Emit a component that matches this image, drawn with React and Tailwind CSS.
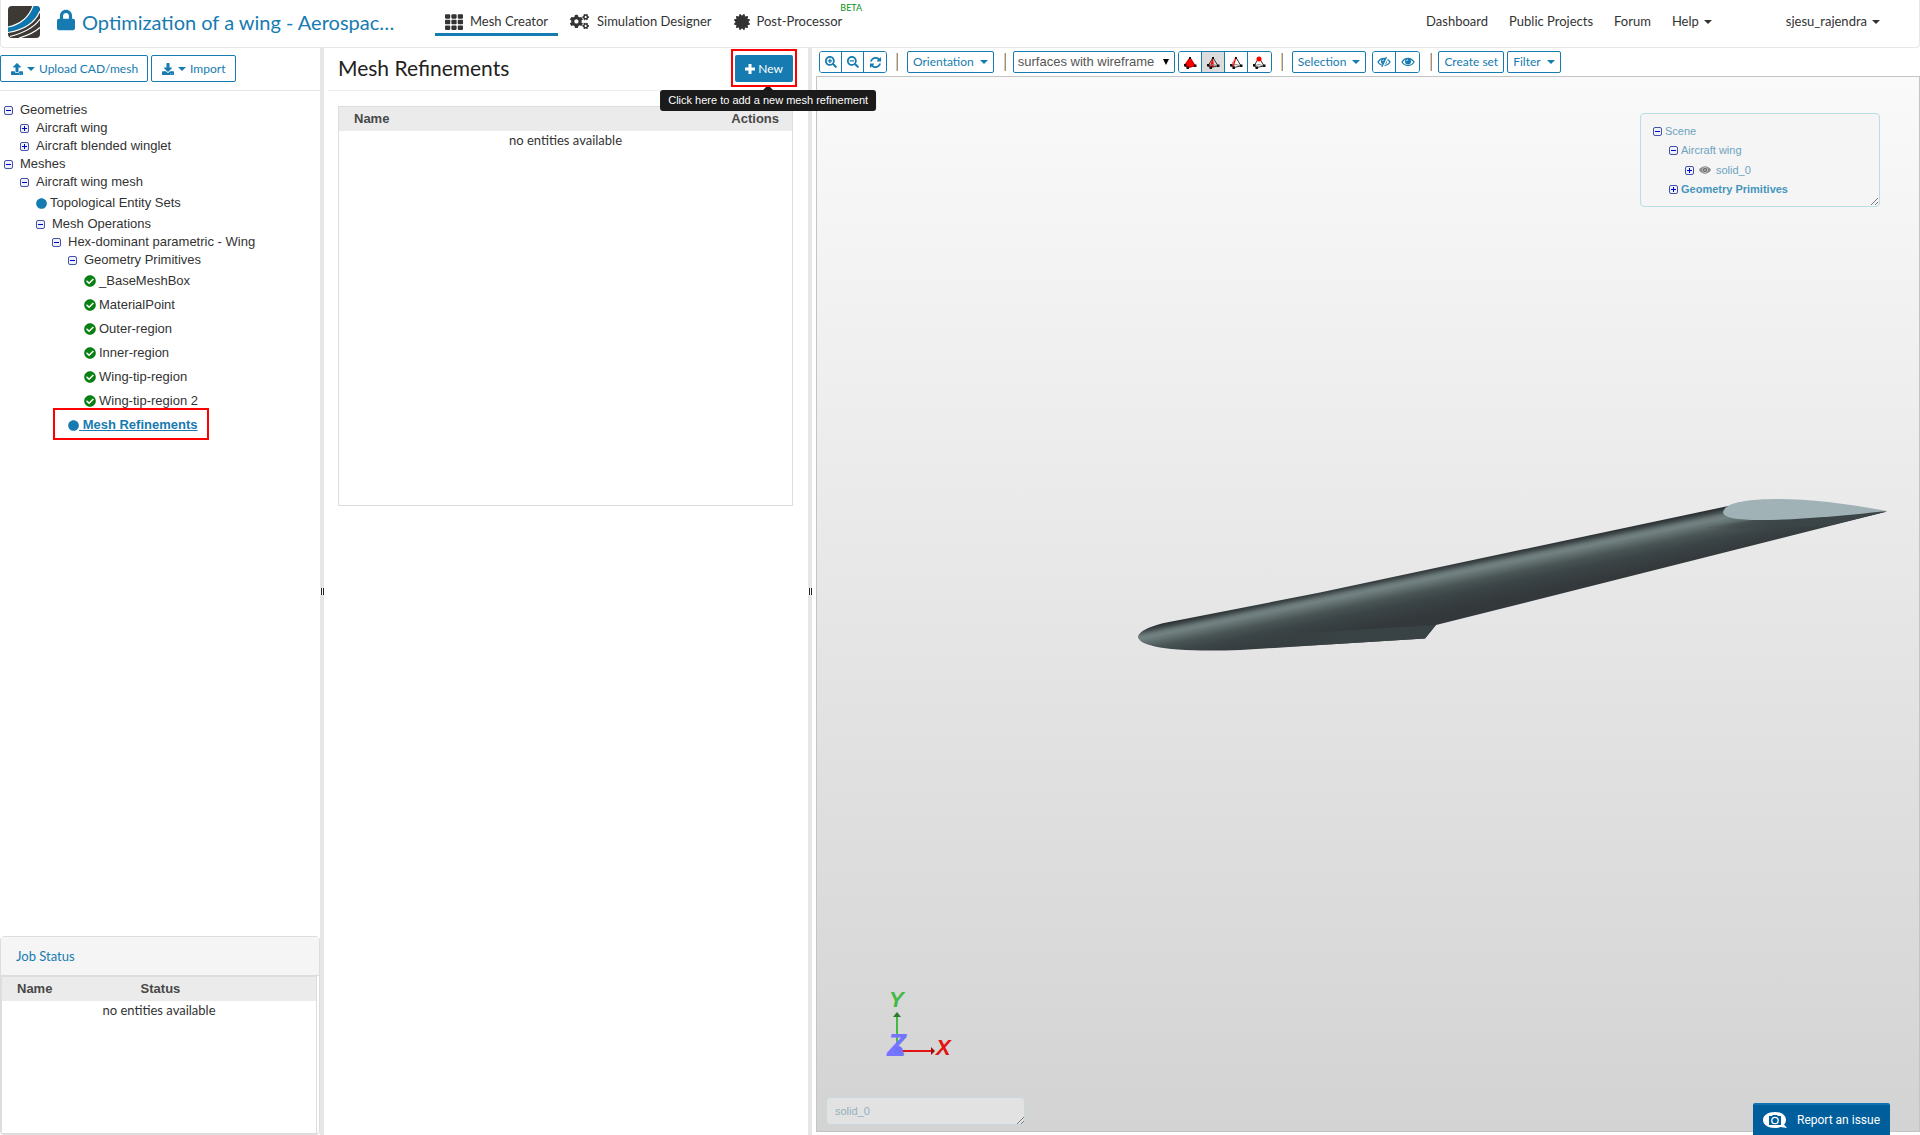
import { useState } from 'react'
import {
  FaCertificate,
  FaCheckCircle,
  FaCircle,
  FaCogs,
  FaDownload,
  FaLock,
  FaSearchMinus,
  FaSearchPlus,
  FaTh,
  FaUpload,
} from 'react-icons/fa'

const TREE = [
  {
    label: 'Geometries',
    open: true,
    children: [
      { label: 'Aircraft wing', children: [] },
      { label: 'Aircraft blended winglet', children: [] },
    ],
  },
  {
    label: 'Meshes',
    open: true,
    children: [
      {
        label: 'Aircraft wing mesh',
        open: true,
        children: [
          { label: 'Topological Entity Sets', status: 'dot' },
          {
            label: 'Mesh Operations',
            open: true,
            children: [
              {
                label: 'Hex-dominant parametric - Wing',
                open: true,
                children: [
                  {
                    label: 'Geometry Primitives',
                    open: true,
                    children: [
                      { label: '_BaseMeshBox', status: 'ok' },
                      { label: 'MaterialPoint', status: 'ok' },
                      { label: 'Outer-region', status: 'ok' },
                      { label: 'Inner-region', status: 'ok' },
                      { label: 'Wing-tip-region', status: 'ok' },
                      { label: 'Wing-tip-region 2', status: 'ok' },
                    ],
                  },
                  { label: 'Mesh Refinements', status: 'dot', selected: true },
                ],
              },
            ],
          },
        ],
      },
    ],
  },
]

function Logo() {
  return (
    <svg viewBox="0 0 32 32" className="size-8 rounded-[4px]" aria-hidden="true">
      <rect width="32" height="32" fill="#3d3935" />
      <path d="M25 0H32V4C27 17 15 24 0 26V21C14 18 22 11 25 0Z" fill="#0d76ae" />
      <g fill="none" stroke="#fff" strokeWidth="1.2">
        <path d="M25 0C21 11 14 18 0 21" />
        <path d="M32 5C27 17 15 24 0 26.500" />
        <path d="M32 13C26 22 15 27 2 30.500" />
        <path d="M32 21.500C27 26 20 29.500 11 32" />
      </g>
    </svg>
  )
}

function Caret() {
  return (
    <svg viewBox="0 0 8 4" className="h-1 w-2 shrink-0" fill="currentColor" aria-hidden="true">
      <path d="M0 0H8L4 4Z" />
    </svg>
  )
}

function RefreshIcon() {
  return (
    <svg viewBox="0 0 1792 1792" className="size-[13px]" fill="currentColor" aria-hidden="true">
      <path d="M1639 1056q0 5-1 7-64 268-268 434.500t-478 166.500q-146 0-282.500-55t-243.500-157l-129 129q-19 19-45 19t-45-19-19-45v-448q0-26 19-45t45-19h448q26 0 45 19t19 45-19 45l-137 137q71 66 161 102t187 36q134 0 250-65t186-179q11-17 53-117 8-23 30-23h192q13 0 22.500 9.500t9.500 22.500zm25-800v448q0 26-19 45t-45 19h-448q-26 0-45-19t-19-45 19-45l138-138q-148-137-349-137-134 0-250 65t-186 179q-11 17-53 117-8 23-30 23h-199q-13 0-22.500-9.500t-9.500-22.500v-7q65-268 270-434.500t480-166.500q146 0 284 55.500t245 156.500l130-129q19-19 45-19t45 19 19 45z" />
    </svg>
  )
}

function EyeIcon({ slashed }) {
  return (
    <svg viewBox="0 0 14 10" className="h-[10px] w-[14px]" aria-hidden="true">
      <path
        d="M1 5C4 .3 10 .3 13 5C10 9.700 4 9.700 1 5Z"
        fill="none"
        stroke="currentColor"
        strokeWidth="1.300"
      />
      <circle cx="7" cy="4.500" r="3" fill="currentColor" />
      <path d="M5.500 4.200A1.600 1.600 0 0 1 7 2.700" fill="none" stroke="#fff" strokeWidth=".8" />
      {slashed && (
        <>
          <path d="M10.500 0L5.500 10" stroke="#fff" strokeWidth="2.400" />
          <path d="M9.500 0L4.800 10" stroke="currentColor" strokeWidth="1.200" />
        </>
      )}
    </svg>
  )
}

function TetraIcon({ mode }) {
  return (
    <svg viewBox="0 0 14 13" className="h-[13px] w-[14px]" aria-hidden="true">
      {mode === 'volume' && <path d="M7 1L13 10L5 12L1 9Z" fill="#f00" />}
      {mode === 'face' && <path d="M7 1L8 11L3.500 11Z" fill="#f00" />}
      <g fill="none" stroke={mode === 'volume' ? '#b00' : '#333'} strokeWidth="1">
        <path d="M7 1.500L2 10L4.500 11.500L12 10L7 1.500" />
        {mode !== 'volume' && <path d="M2 10L7 8.500L12 10" stroke="#888" />}
      </g>
      {mode === 'edge' && <path d="M7 1L4 11" stroke="#f00" strokeWidth="1.200" />}
      {mode === 'edge' && <path d="M7 1L2 10" stroke="#f88" strokeWidth="1" />}
      <g fill="#111">
        <rect x="6" y="1" width="2" height="2" />
        <rect x="1" y="8" width="2.500" height="2.500" />
        <rect x="3.500" y="10.500" width="2.500" height="2.500" />
        <rect x="11" y="8.500" width="2.500" height="2.500" />
      </g>
      {mode === 'vertex' && <circle cx="7" cy="3" r="2.500" fill="#f00" />}
    </svg>
  )
}

function Toggle({ open, label, onClick }) {
  return (
    <button
      type="button"
      onClick={onClick}
      aria-label={`${open ? 'Collapse' : 'Expand'} ${label}`}
      className="flex shrink-0 items-center"
    >
      <svg viewBox="0 0 9 9" className="size-[9px]" aria-hidden="true">
        <rect x=".5" y=".5" width="8" height="8" rx="1.500" fill="#eef0f8" stroke="#4453a8" />
        <path d={open ? 'M2 4.500H7' : 'M2 4.500H7M4.500 2V7'} stroke="#0000c8" />
      </svg>
    </button>
  )
}

function TreeNode({ node }) {
  const [open, setOpen] = useState(Boolean(node.open))

  if (!node.children) {
    return (
      <li className="relative flex h-6 items-center">
        {node.status === 'ok' ? (
          <FaCheckCircle className="size-3 text-[#0a7f14]" />
        ) : (
          <FaCircle className="size-[11px] text-[#167bb0]" />
        )}
        {node.selected ? (
          <>
            <a href="#refinements" className="font-bold whitespace-pre text-[#167bb0] underline">
              {' '}
              {node.label}
            </a>
            <span className="pointer-events-none absolute -top-[5px] -left-[15px] h-8 w-[156px] border-2 border-[#f00]" />
          </>
        ) : (
          <span className="pl-[3px]">{node.label}</span>
        )}
      </li>
    )
  }

  return (
    <li>
      <div className="flex h-[18px] items-center gap-[7px]">
        <Toggle open={open} label={node.label} onClick={() => setOpen(!open)} />
        <span>{node.label}</span>
      </div>
      {open && (
        <ul className="pl-4">
          {node.children.map((child) => (
            <TreeNode key={child.label} node={child} />
          ))}
        </ul>
      )}
    </li>
  )
}

function EntityTable({ columns }) {
  return (
    <table className="w-full table-fixed">
      <thead>
        <tr className="h-6 bg-[#ebebeb] font-['Liberation_Sans',sans-serif] text-[13px] text-[#484848]">
          {columns.map((column) => (
            <th key={column.label} className={column.className}>
              {column.label}
            </th>
          ))}
        </tr>
      </thead>
      <tbody>
        <tr>
          <td colSpan={columns.length} className="text-center leading-[18px]">
            no entities available
          </td>
        </tr>
      </tbody>
    </table>
  )
}

function Splitter() {
  return (
    <div
      role="separator"
      aria-orientation="vertical"
      className="flex w-1 shrink-0 cursor-col-resize flex-col items-end justify-center bg-[#e6e6e6]"
    >
      <span className="flex h-[7px] w-1 justify-end gap-px bg-white">
        <span className="w-px bg-[#222]" />
        <span className="w-px bg-[#222]" />
      </span>
    </div>
  )
}

function Header() {
  return (
    <header className="flex h-12 shrink-0 items-start rounded-b border border-t-0 border-[#e7e7e7] text-[#333]">
      <a href="#home" aria-label="Home" className="mt-[6px] ml-[7px]">
        <Logo />
      </a>
      <h1 className="ml-[17px] flex h-11 w-[378px] items-center gap-[7px] text-xl text-[#167bb0]">
        <FaLock className="mb-1 h-[22px] w-[18px] shrink-0" />
        <span>Optimization of a wing - Aerospac…</span>
      </h1>
      <nav className="flex h-9 items-stretch gap-[2px]">
        <a
          href="#mesh"
          className="flex items-center gap-[7px] border-b-3 border-[#167bb0] px-[10px] pt-[10px]"
        >
          <FaTh className="size-[18px]" />
          Mesh Creator
        </a>
        <a href="#simulation" className="flex items-center gap-2 px-[10px] pt-[10px] pb-[3px]">
          <FaCogs className="size-[19px]" />
          Simulation Designer
        </a>
        <a href="#post" className="relative flex items-center gap-[7px] px-[10px] pt-[10px] pb-[3px]">
          <FaCertificate className="size-4" />
          Post-Processor
          <span className="absolute top-0 left-full -ml-3 text-[9px] leading-4 text-[#0a8f14]">
            BETA
          </span>
        </a>
      </nav>
      <nav className="mr-[39px] ml-auto flex h-11 items-center gap-[21px]">
        <a href="#dashboard">Dashboard</a>
        <a href="#projects">Public Projects</a>
        <a href="#forum">Forum</a>
        <button type="button" className="flex items-center gap-[5px]">
          Help <Caret />
        </button>
        <button type="button" className="ml-[53px] flex items-center gap-[5px]">
          sjesu_rajendra <Caret />
        </button>
      </nav>
    </header>
  )
}

function Sidebar() {
  return (
    <aside className="flex w-80 shrink-0 flex-col">
      <div className="flex h-[43px] gap-[3px] border-b border-[#e4e4e4] pt-[7px] text-xs text-[#167bb0]">
        <button
          type="button"
          className="flex h-[27px] items-center gap-1 rounded-[2px] border border-[#167bb0] pr-[9px] pl-[10px]"
        >
          <FaUpload className="size-3" />
          <Caret />
          Upload CAD/mesh
        </button>
        <button
          type="button"
          className="flex h-[27px] items-center gap-1 rounded-[2px] border border-[#167bb0] px-[10px]"
        >
          <FaDownload className="size-3" />
          <Caret />
          Import
        </button>
      </div>
      <ul className="flex-1 pt-[10px] pl-1 font-['Liberation_Sans',sans-serif] text-[13px] text-[#333]">
        {TREE.map((node) => (
          <TreeNode key={node.label} node={node} />
        ))}
      </ul>
      <section className="flex h-[199px] flex-col rounded border border-[#ddd]">
        <h2 className="flex h-[39px] shrink-0 items-center border-b border-[#ddd] bg-[#f5f5f5] px-[15px] pt-[2px] text-[#167bb0]">
          Job Status
        </h2>
        <div className="mr-[2px] flex-1 border border-[#ddd]">
          <EntityTable
            columns={[
              { label: 'Name', className: 'w-[40%] pl-[15px] text-left' },
              { label: 'Status', className: 'pl-[13px] text-left' },
            ]}
          />
        </div>
      </section>
    </aside>
  )
}

function RefinementsPanel() {
  return (
    <section className="w-[484px] shrink-0 pl-1">
      <div className="flex h-[43px] items-start justify-between border-b border-[#ececec] pt-[7px] pr-[15px] pl-[10px]">
        <h2 className="text-[21px] leading-[26px] text-[#222]">Mesh Refinements</h2>
        <div className="relative">
          <button
            type="button"
            aria-describedby="new-tip"
            className="flex h-[27px] items-center gap-[3px] rounded-[2px] bg-[#167bb0] px-[10px] text-xs text-white"
          >
            <svg viewBox="0 0 10 10" className="size-[10px]" aria-hidden="true">
              <path d="M5 0V10M0 5H10" stroke="currentColor" strokeWidth="3" />
            </svg>
            New
          </button>
          <span className="pointer-events-none absolute -inset-x-1 -top-[6px] h-[38px] border-2 border-[#f00]" />
          <div
            id="new-tip"
            role="tooltip"
            className="absolute top-8 left-1/2 z-10 ml-1 flex -translate-x-1/2 flex-col items-center font-['Liberation_Sans',sans-serif] text-[11px] text-white"
          >
            <svg viewBox="0 0 10 3" className="h-[3px] w-[10px]" fill="#1b1b1b" aria-hidden="true">
              <path d="M3 0H7L10 3H0Z" />
            </svg>
            <span className="rounded-[3px] bg-[#1b1b1b] px-2 leading-[21px] whitespace-nowrap">
              Click here to add a new mesh refinement
            </span>
          </div>
        </div>
      </div>
      <div className="mt-[15px] mr-[15px] ml-[10px] h-[400px] border border-[#ddd]">
        <EntityTable
          columns={[
            { label: 'Name', className: 'pl-[15px] text-left' },
            { label: 'Actions', className: 'pr-[13px] text-right' },
          ]}
        />
      </div>
    </section>
  )
}

function Divider({ className }) {
  return <span className={`h-[18px] w-[2px] border-l border-[#e8c794] bg-[#8c97a3] ${className}`} />
}

function ButtonGroup({ items, buttonClass }) {
  return (
    <div className="flex h-[22px] divide-x divide-[#167bb0] overflow-hidden rounded-[3px] border border-[#167bb0]">
      {items.map((item) => (
        <button
          key={item.label}
          type="button"
          aria-label={item.label}
          className={`flex items-center justify-center ${buttonClass} ${item.active ? 'bg-[#dcdcdc]' : 'bg-white'}`}
        >
          {item.icon}
        </button>
      ))}
    </div>
  )
}

function MenuButton({ children, caret = true }) {
  return (
    <button
      type="button"
      className="flex h-[22px] items-center gap-[6px] rounded-[2px] border border-[#167bb0] px-[5px]"
    >
      {children}
      {caret && <Caret />}
    </button>
  )
}

function ViewerToolbar() {
  return (
    <div className="flex h-7 shrink-0 items-center pl-[7px] text-xs text-[#167bb0]">
      <ButtonGroup
        buttonClass="w-[22px]"
        items={[
          { label: 'Zoom in', icon: <FaSearchPlus className="size-3" /> },
          { label: 'Zoom out', icon: <FaSearchMinus className="size-3" /> },
          { label: 'Reset view', icon: <RefreshIcon /> },
        ]}
      />
      <Divider className="mr-[9px] ml-[9px]" />
      <MenuButton>Orientation</MenuButton>
      <Divider className="mr-[7px] ml-[10px]" />
      <div className="relative mr-[3px] flex">
        <select
          aria-label="Render mode"
          className="h-[22px] w-[162px] appearance-none rounded-[2px] border border-[#167bb0] bg-white pl-1 font-['Liberation_Sans',sans-serif] text-[13px] text-[#555]"
        >
          <option>surfaces with wireframe</option>
          <option>surfaces</option>
          <option>wireframe</option>
        </select>
        <svg
          viewBox="0 0 6 6"
          className="pointer-events-none absolute top-2 right-[6px] size-[6px]"
          aria-hidden="true"
        >
          <path d="M0 0H6L3 6Z" fill="#000" />
        </svg>
      </div>
      <ButtonGroup
        buttonClass="w-[23px]"
        items={[
          { label: 'Pick volumes', icon: <TetraIcon mode="volume" /> },
          { label: 'Pick faces', icon: <TetraIcon mode="face" />, active: true },
          { label: 'Pick edges', icon: <TetraIcon mode="edge" /> },
          { label: 'Pick vertices', icon: <TetraIcon mode="vertex" /> },
        ]}
      />
      <Divider className="mr-[9px] ml-[9px]" />
      <MenuButton>Selection</MenuButton>
      <div className="ml-[6px]">
        <ButtonGroup
          buttonClass="w-[23px]"
          items={[
            { label: 'Hide selection', icon: <EyeIcon slashed /> },
            { label: 'Show all', icon: <EyeIcon /> },
          ]}
        />
      </div>
      <Divider className="mr-[6px] ml-[10px]" />
      <div className="flex gap-[3px]">
        <MenuButton caret={false}>Create set</MenuButton>
        <MenuButton>Filter</MenuButton>
      </div>
    </div>
  )
}

function ResizeGrip() {
  return (
    <svg viewBox="0 0 8 8" className="absolute right-px bottom-px size-2" aria-hidden="true">
      <path d="M1 8L8 1M5 8L8 5" stroke="#777" strokeWidth="1" />
    </svg>
  )
}

function ScenePanel() {
  return (
    <div className="absolute top-9 right-[39px] h-[94px] w-60 rounded border border-[#b9dde6] bg-[#f5f5f5] pt-2 pl-3 font-['Liberation_Sans',sans-serif] text-[11px] text-[#6ca3bf]">
      <ul>
        <li>
          <div className="flex h-[19px] items-center gap-[3px]">
            <Toggle open label="Scene" />
            Scene
          </div>
          <ul className="pl-4">
            <li>
              <div className="flex h-[19px] items-center gap-[3px]">
                <Toggle open label="Aircraft wing" />
                Aircraft wing
              </div>
              <ul className="pl-4">
                <li className="flex h-5 items-center gap-[5px]">
                  <Toggle label="solid_0" />
                  <svg viewBox="0 0 12 8" className="h-2 w-3" aria-hidden="true">
                    <path d="M0 4C3-1 9-1 12 4C9 9 3 9 0 4Z" fill="#8a8a86" />
                    <circle cx="6" cy="4" r="2.600" fill="#666" stroke="#ddd" strokeWidth=".7" />
                    <circle cx="6" cy="4" r=".8" fill="#eee" />
                  </svg>
                  solid_0
                </li>
              </ul>
            </li>
            <li className="flex h-[19px] items-center gap-[3px] font-bold text-[#4596bd]">
              <Toggle label="Geometry Primitives" />
              Geometry Primitives
            </li>
          </ul>
        </li>
      </ul>
      <ResizeGrip />
    </div>
  )
}

function Wing() {
  return (
    <svg
      viewBox="1130 490 770 170"
      className="absolute top-[413px] left-[313px] h-[170px] w-[770px]"
      role="img"
      aria-label="Aircraft wing model"
    >
      <defs>
        <linearGradient id="skin" gradientUnits="userSpaceOnUse" x1="1500" y1="554" x2="1512" y2="612">
          <stop offset="0" stopColor="#2b3032" />
          <stop offset=".05" stopColor="#3f484a" />
          <stop offset=".12" stopColor="#697777" />
          <stop offset=".17" stopColor="#728181" />
          <stop offset=".23" stopColor="#667474" />
          <stop offset=".35" stopColor="#4a5556" />
          <stop offset=".5" stopColor="#3b4446" />
          <stop offset=".75" stopColor="#34393c" />
          <stop offset="1" stopColor="#32373a" />
        </linearGradient>
        <linearGradient id="facet" gradientUnits="userSpaceOnUse" x1="1230" y1="0" x2="1340" y2="0">
          <stop offset="0" stopColor="#3a4345" stopOpacity="0" />
          <stop offset="1" stopColor="#394244" />
        </linearGradient>
        <linearGradient id="under" gradientUnits="userSpaceOnUse" x1="1700" y1="0" x2="1790" y2="0">
          <stop offset="0" stopColor="#3b4446" stopOpacity="0" />
          <stop offset="1" stopColor="#3b4446" />
        </linearGradient>
      </defs>
      <path
        d="M1138 637C1139 630 1155 624 1177 620.500L1320 592.500L1520 550L1733 505L1760 500L1887 511.500L1500 609L1436 625L1425 638.500L1320 645L1240 650Q1180 652 1155 646.500Q1139 643 1138 637Z"
        fill="url(#skin)"
      />
      <path d="M1230 635L1320 632L1436 625L1425 638.500L1320 645L1230 650Z" fill="url(#facet)" />
      <path d="M1700 528L1760 519L1887 511.500L1832 525L1740 529Z" fill="url(#under)" />
      <path
        d="M1723 512C1725 503 1745 499 1779 499C1810 499 1850 504 1887 511C1850 515 1800 520 1760 520C1738 520 1723 518 1723 512Z"
        fill="#a0b2b6"
      />
    </svg>
  )
}

function Axes() {
  return (
    <svg
      viewBox="880 985 75 78"
      className="absolute bottom-[68px] left-[63px] h-[78px] w-[75px]"
      role="img"
      aria-label="Axis orientation"
    >
      <path d="M897 1050V1016" stroke="#44b944" strokeWidth="2" />
      <path d="M893 1017L897 1012L901 1017Z" fill="#2c7a2c" />
      <path d="M899 1051H932" stroke="#e11414" strokeWidth="2" />
      <path d="M931 1047L935 1051L931 1055Z" fill="#a00c0c" />
      <circle cx="898" cy="1051" r="5" fill="#7070fc" />
      <g fontFamily="Liberation Sans, sans-serif" fontStyle="italic" fontWeight="bold">
        <text x="889" y="1007" fontSize="22" fill="#44b944">Y</text>
        <text x="936" y="1055" fontSize="22" fill="#e11414">X</text>
        <text x="887" y="1056" fontSize="31" fill="#7474ff">Z</text>
      </g>
    </svg>
  )
}

function Viewer() {
  return (
    <main className="flex min-w-0 flex-1 flex-col pb-[3px]">
      <ViewerToolbar />
      <div className="relative ml-1 flex-1 overflow-hidden border border-[#c4c4c4] bg-linear-to-b from-[#fafafa] to-[#d3d3d3]">
        <Wing />
        <ScenePanel />
        <Axes />
        <div className="absolute bottom-[6px] left-[9px] h-7 w-[199px]">
          <textarea
            readOnly
            aria-label="Selected entities"
            defaultValue="solid_0"
            className="block h-full w-full resize-none overflow-hidden rounded border border-[#c9d8df] bg-[#e2e2e2] px-2 py-1 font-['Liberation_Sans',sans-serif] text-[11px] leading-[18px] text-[#94b0be]"
          />
          <ResizeGrip />
        </div>
      </div>
    </main>
  )
}

export default function App() {
  return (
    <div className="flex h-screen flex-col overflow-hidden bg-white font-['Lato',sans-serif] text-[13px] text-[#333]">
      <Header />
      <div className="flex min-h-0 flex-1">
        <Sidebar />
        <Splitter />
        <RefinementsPanel />
        <Splitter />
        <Viewer />
      </div>
      <button
        type="button"
        className="fixed right-[30px] bottom-0 flex h-8 items-center gap-[10px] rounded-t-[2px] border-t-2 border-[#0f73b5] bg-[#005e9d] px-[10px] font-['Roboto',sans-serif] text-xs text-white"
      >
        <svg viewBox="0 0 24 16" className="h-4 w-6" aria-hidden="true">
          <path d="M12 0C19 0 23 3.500 23 8C23 10 22 11.500 21 12.500L24 16L17.500 15C16 15.600 14 16 12 16C5 16 0 12.500 0 8C0 3.500 5 0 12 0Z" fill="#fff" />
          <path d="M6 4H9L10 3H14L15 4H18V13H6Z" fill="#005e9d" />
          <circle cx="12" cy="8.500" r="3.200" fill="#005e9d" stroke="#fff" strokeWidth="1.300" />
        </svg>
        Report an issue
      </button>
    </div>
  )
}
